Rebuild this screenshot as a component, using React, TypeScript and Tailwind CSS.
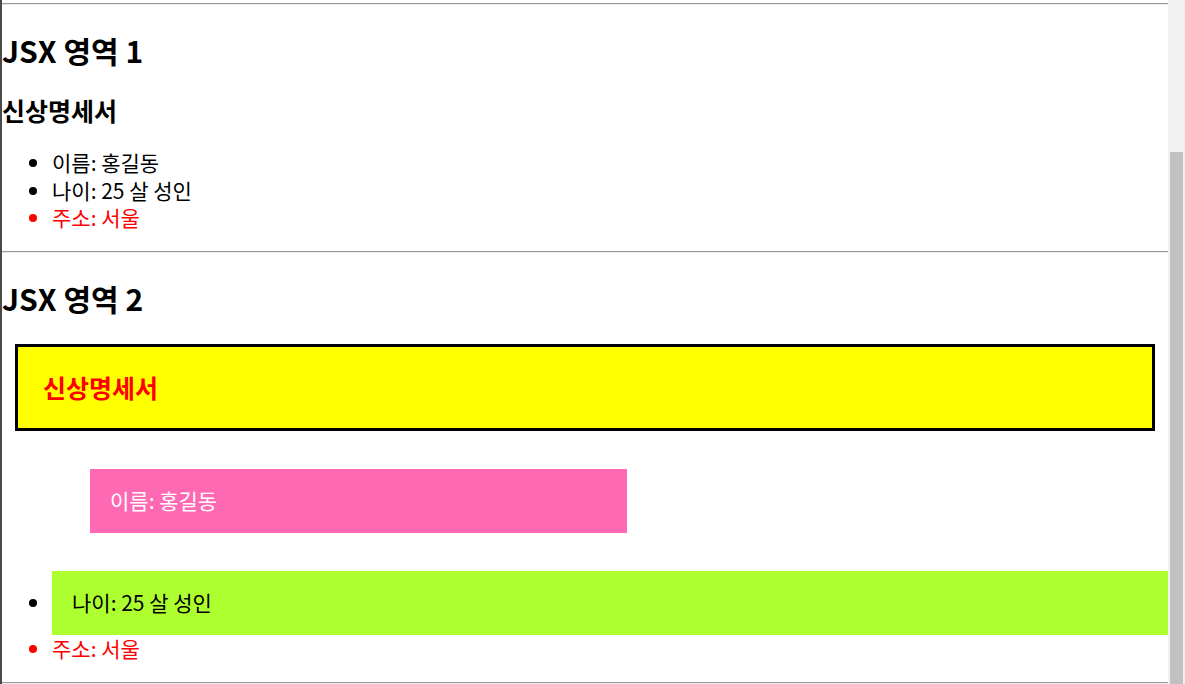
import React from "react";

const font = { fontFamily: '"Noto Sans CJK KR", "Noto Sans", sans-serif' };

function Hr() {
  return <div className="h-[2px] border-t border-b border-t-[#9a9a9a] border-b-[#ededed]" />;
}

export default function App() {
  return (
    <div className="flex h-[684px] w-[1185px] overflow-hidden bg-white" style={font}>
      <div className="w-[1168px] shrink-0 border-l-2 border-[#4a4a4a] overflow-hidden text-black">
        <div className="h-[3px]" />
        <Hr />
        <h2 className="mt-[25px] h-[40px] text-[30px] font-bold leading-[40px] whitespace-nowrap">JSX 영역 1</h2>
        <h3 className="mt-[25px] h-[31px] text-[25px] font-bold leading-[31px] whitespace-nowrap">신상명세서</h3>
        <ul className="mt-[23px] list-disc pl-[50px] text-[21px] leading-[27.5px]">
          <li>이름: 홍길동</li>
          <li>나이: 25 살 성인</li>
          <li className="text-[#ff0000]">주소: 서울</li>
        </ul>
        <div className="h-[19.5px]" />
        <Hr />
        <h2 className="mt-[25px] h-[40px] text-[30px] font-bold leading-[40px] whitespace-nowrap">JSX 영역 2</h2>
        <div className="mx-[13px] mt-[26px] border-[3px] border-black bg-[#ffff00] px-[25px] py-[25px]">
          <h3 className="h-[31px] text-[25px] font-bold leading-[31px] text-[#ff0000] whitespace-nowrap">신상명세서</h3>
        </div>
        <ul className="mt-[38px] list-disc pl-[50px] text-[21px] leading-[27.5px]">
          <li className="ml-[38px] w-[537px] list-none bg-[#ff69b4] px-[20px] py-[18.25px] text-white">이름: 홍길동</li>
          <li className="mt-[38px] bg-[#adff2f] px-[20px] py-[18.25px]">나이: 25 살 성인</li>
          <li className="text-[#ff0000]">주소: 서울</li>
        </ul>
        <div className="h-[19.5px]" />
        <Hr />
      </div>
      <div className="flex w-[17px] shrink-0 flex-col bg-[#f1f1f1]">
        <div className="h-[152px]" />
        <div className="mx-[2px] flex-1 bg-[#c1c1c1]" />
      </div>
    </div>
  );
}
